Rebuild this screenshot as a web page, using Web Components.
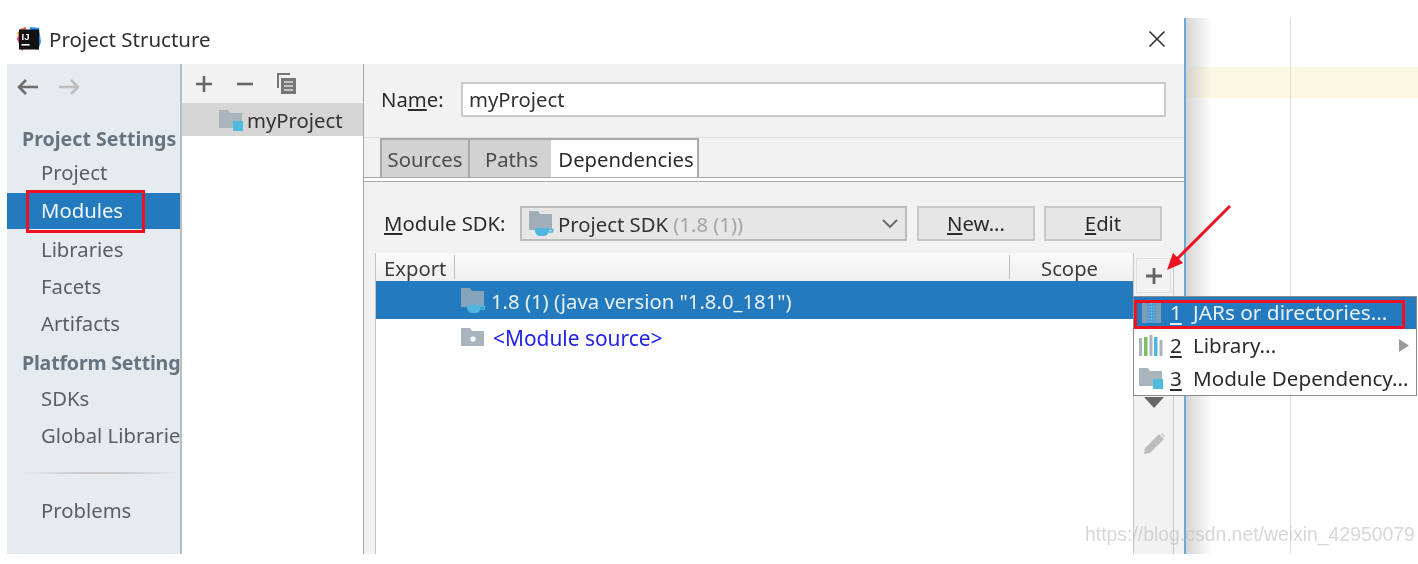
<!DOCTYPE html>
<html>
<head>
<meta charset="utf-8">
<title>Project Structure</title>
<style>
    html, body { margin: 0; background: #fff; }
    body { font-family: "Noto Sans", "Open Sans", sans-serif; font-size: 20.3px; color: #333; }
</style>
</head>
<body>
<ps-app>
    <ps-titlebar slot="title">Project Structure</ps-titlebar>
    <ps-sidebar slot="sidebar">
        <ps-nav-item kind="header" style="height:36px;line-height:38px">Project Settings</ps-nav-item>
        <ps-nav-item style="line-height:33px">Project</ps-nav-item>
        <ps-nav-item selected style="height:36px">Modules</ps-nav-item>
        <ps-nav-item style="margin-top:1px;line-height:38px">Libraries</ps-nav-item>
        <ps-nav-item style="line-height:38px">Facets</ps-nav-item>
        <ps-nav-item style="line-height:38px">Artifacts</ps-nav-item>
        <ps-nav-item kind="header" style="margin-top:3px;line-height:38px;letter-spacing:-.2px">Platform Setting</ps-nav-item>
        <ps-nav-item>SDKs</ps-nav-item>
        <ps-nav-item>Global Librarie</ps-nav-item>
        <ps-nav-item kind="rule"></ps-nav-item>
        <ps-nav-item>Problems</ps-nav-item>
    </ps-sidebar>
    <ps-modules slot="modules"></ps-modules>
    <ps-module-panel slot="panel"></ps-module-panel>
    <ps-editor slot="editor"></ps-editor>
    <ps-popup slot="overlay"></ps-popup>
</ps-app>

<script>
(function () {
    // small svg bits used in more than one element
    const folder = (c) => `<path d="M0 2h9l2 3h12v15H0z" fill="${c}"/>`;
    const sdkIcon = (c) => `<svg width="25" height="25" viewBox="0 0 25 25">
        <path d="M0 0h9l2 3h12v16H0z" fill="${c}"/>
        <path d="M6 17h14v2c0 3-2 6-5 6h-4c-3 0-5-3-5-6z" fill="#4fb6de"/>
        <path d="M20 18.500h3.500v2.500H20" fill="none" stroke="#4fb6de" stroke-width="1.500"/>
    </svg>`;
    const moduleIcon = `<svg width="25" height="24" viewBox="0 0 25 24">${folder('#a9b5bd')}<rect x="14" y="13" width="10" height="10" fill="#4fb9de"/></svg>`;

    function define(name, css, html) {
        const template = document.createElement('template');
        template.innerHTML = `<style>${css}</style>${html}`;
        customElements.define(name, class extends HTMLElement {
            constructor() {
                super();
                this.attachShadow({ mode: 'open' }).appendChild(template.content.cloneNode(true));
            }
        });
    }

    define('ps-app', `
        :host { display: block; position: relative; width: 1418px; height: 564px; overflow: hidden; filter: blur(0.55px); }
        .page { display: flex; padding: 18px 0 0 7px; height: 536px; }
        .dialog { width: 1177px; display: flex; flex-direction: column; border-right: 2px solid #6aa9dc; background: #fff; }
        .content { flex: 1; display: flex; min-height: 0; }
        .arrow { position: absolute; left: 1160px; top: 198px; }
        .mark { position: absolute; left: 26px; top: 190px; width: 113px; height: 37px; border: 3px solid #ee1122; }
        .popmark { position: absolute; left: 1134px; top: 300px; width: 265px; height: 23px; border: 3px solid #ee1122; z-index: 3; }
        .water { position: absolute; left: 1085px; top: 523px; font: 19.4px "Liberation Sans", Arial, sans-serif; color: rgba(190,190,190,.62); white-space: nowrap; z-index: 4; }
    `, `
        <div class="page">
            <div class="dialog">
                <slot name="title"></slot>
                <div class="content">
                    <slot name="sidebar"></slot>
                    <slot name="modules"></slot>
                    <slot name="panel"></slot>
                </div>
            </div>
            <slot name="editor"></slot>
        </div>
        <slot name="overlay"></slot>
        <div class="mark"></div>
        <div class="popmark"></div>
        <svg class="arrow" width="76" height="76" viewBox="0 0 76 76">
            <path d="M70 8L14 64" stroke="#ee1122" stroke-width="3" fill="none"/>
            <path d="M7 72l6-17 10 10z" fill="#ee1122"/>
        </svg>
        <div class="water">https://blog.csdn.net/weixin_42950079</div>
    `);

    define('ps-titlebar', `
        :host { display: flex; align-items: center; height: 46px; box-sizing: border-box; padding: 0 18px 4px 10px; flex: none; color: #2f2f2f; font-size: 20.5px; }
        .t { margin-left: 8px; flex: 1; }
        svg { display: block; }
    `, `
        <svg width="24" height="24" viewBox="0 0 24 24">
            <path d="M3 2L9 0 8 20 5 24 0 12z" fill="#f0326e"/>
            <path d="M13 0l9 1 2 14-3 8-10-3z" fill="#1f8ceb"/>
            <path d="M0 6l6-5 5 4-8 8z" fill="#f7941d"/>
            <rect x="2" y="2.500" width="20" height="20" fill="#111"/>
            <text x="4.500" y="12.500" font-family="Liberation Sans" font-size="9.500" font-weight="700" fill="#fff">IJ</text>
            <rect x="4.500" y="17" width="8" height="1.600" fill="#fff"/>
        </svg>
        <span class="t"><slot></slot></span>
        <svg width="18" height="18" viewBox="0 0 18 18"><path d="M1.500 1.500l15 15M16.500 1.500l-15 15" stroke="#333" stroke-width="1.600" fill="none"/></svg>
    `);

    define('ps-sidebar', `
        :host { display: flex; flex-direction: column; width: 173px; flex: none; background: #e6ebf0; border-right: 2px solid #b9bcbf; overflow: hidden; }
        .nav { height: 56px; flex: none; display: flex; align-items: flex-start; gap: 19px; padding-left: 9px; box-sizing: border-box; }
        svg { margin-top: 13px; }
    `, `
        <div class="nav">
            <svg width="23" height="20" viewBox="0 0 23 20"><path d="M22 10H3M10 3l-7 7 7 7" stroke="#6e6e6e" stroke-width="2.600" fill="none"/></svg>
            <svg width="23" height="20" viewBox="0 0 23 20"><path d="M1 10h19M13 3l7 7-7 7" stroke="#bdbdbd" stroke-width="2.600" fill="none"/></svg>
        </div>
        <slot></slot>
    `);

    class NavItem extends HTMLElement {
        constructor() {
            super();
            this.attachShadow({ mode: 'open' }).innerHTML = `
                <style>
                    :host { display: block; height: 37px; line-height: 35px; padding-left: 34px; color: #5a5f66; white-space: nowrap; flex: none; }
                    :host([selected]) { background: #247abf; color: #f0f6fb; }
                    :host([kind="header"]) { padding-left: 15px; font-weight: 700; font-size: 19.6px; color: #667480; }
                    :host([kind="rule"]) { height: 2px; margin: 17px 0 19px 15px; padding: 0; background: linear-gradient(90deg, #e6ebf0, #c6c8ca 40%, #c6c8ca 60%, #e6ebf0); }
                </style>
                <slot></slot>`;
        }
    }
    customElements.define('ps-nav-item', NavItem);

    define('ps-modules', `
        :host { display: block; width: 181px; flex: none; background: #fff; border-right: 1px solid #a8a8a8; }
        .bar { height: 39px; background: #f2f2f2; display: flex; align-items: center; padding-left: 12px; gap: 21px; }
        .row { height: 33px; background: #d5d5d5; display: flex; align-items: center; padding-left: 37px; gap: 3px; color: #333; }
        svg { display: block; }
    `, `
        <div class="bar">
            <svg width="20" height="20" viewBox="0 0 20 20"><path d="M10 2v16M2 10h16" stroke="#666" stroke-width="2.600"/></svg>
            <svg width="20" height="20" viewBox="0 0 20 20"><path d="M2 10h16" stroke="#666" stroke-width="2.600"/></svg>
            <svg width="22" height="22" viewBox="0 0 22 22"><path d="M2 15V1h12" stroke="#777" stroke-width="2" fill="none"/><rect x="5" y="5" width="15" height="16" fill="#777"/><path d="M8 9h9M8 13h9M8 17h9" stroke="#ddd" stroke-width="1.400"/></svg>
        </div>
        <div class="row">${moduleIcon}<span>myProject</span></div>
    `);

    define('ps-module-panel', `
        :host { flex: 1; display: flex; flex-direction: column; min-width: 0; background: #f2f2f2; }
        .name { height: 73px; box-sizing: border-box; padding: 18px 18px 0 17px; display: flex; gap: 20px; flex: none; }
        .name label { width: 60px; line-height: 35px; color: #2b2b2b; white-space: nowrap; }
        .name .in { flex: 1; height: 35px; box-sizing: border-box; border: 2px solid #cbcbcb; background: #fff; padding-left: 6px; line-height: 31px; }
        .tabs { height: 40px; flex: none; box-sizing: border-box; border-top: 1px solid #dedede; padding-left: 16px; display: flex; align-items: stretch; }
        .tab { box-sizing: border-box; border: 2px solid #a9a9a9; border-bottom: 0; border-right: 0; padding-top: 1px; background: #d2d2d2; color: #4c4c4c; display: flex; align-items: center; justify-content: center; }
        .tab.paths { padding-left: 2px; }
        .tab.on { background: #fff; color: #2b2b2b; border-right: 2px solid #a9a9a9; border-left: 0; padding-left: 4px; }
        .strip { height: 5px; box-sizing: border-box; flex: none; background: #fff; border-top: 1px solid #a9a9a9; border-bottom: 1px solid #a9a9a9; }
        .sdk { display: flex; align-items: stretch; height: 35px; margin: 24px 0 0 20px; flex: none; }
        .sdk label { width: 136px; line-height: 35px; color: #2b2b2b; white-space: nowrap; }
        .combo { width: 387px; box-sizing: border-box; border: 2px solid #bcbcbc; background: #e6e6e6; display: flex; align-items: center; padding: 0 7px; gap: 4px; }
        .combo .v { flex: 1; white-space: nowrap; }
        .combo em { font-style: normal; color: #a5a5a5; }
        .btn { width: 118px; margin-left: 10px; box-sizing: border-box; border: 2px solid #c8c8c8; background: #e6e6e6; text-align: center; line-height: 31px; color: #2b2b2b; }
        .btn + .btn { margin-left: 9px; }
        .deps { flex: 1; display: flex; margin: 12px 10px 0 11px; min-height: 0; }
        .table { flex: 1; background: #fff; border-left: 1px solid #c4c4c4; min-width: 0; }
        .head { height: 28px; display: flex; background: linear-gradient(#fbfbfb, #efefef); color: #3c3c3c; box-sizing: border-box; }
        .head .c1 { width: 79px; box-sizing: border-box; padding-left: 8px; border-right: 1px solid #bdbdbd; margin: 2px 0; line-height: 26px; }
        .head .c2 { flex: 1; border-right: 1px solid #bdbdbd; margin: 2px 0; }
        .head .c3 { width: 123px; box-sizing: border-box; padding-left: 31px; line-height: 26px; margin: 2px 0; }
        .dep { height: 38px; box-sizing: border-box; display: flex; align-items: center; padding-left: 85px; gap: 6px; white-space: nowrap; }
        .dep.on { background: #247abf; color: #e9f1f8; }
        .dep.on span { padding-top: 2px; margin-left: -1px; }
        .dep a { color: #2222ee; text-decoration: none; margin-left: 2px; font-size: 20.9px; }
        .tools { width: 41px; flex: none; box-sizing: border-box; border-left: 1px solid #c4c4c4; border-right: 1px solid #c9c9c9; display: flex; flex-direction: column; align-items: center; position: relative; }
        .plus { margin-top: 5px; width: 35px; height: 35px; box-sizing: border-box; border: 1px solid #dfdfdf; display: flex; align-items: center; justify-content: center; }
        .down { margin-top: 104px; }
        .pen { margin-top: 24px; }
        svg { display: block; flex: none; }
        u { text-underline-offset: 2px; }
    `, `
        <div class="name">
            <label>Na<u>m</u>e:</label>
            <div class="in">myProject</div>
        </div>
        <div class="tabs">
            <div class="tab" style="width:88px">Sources</div>
            <div class="tab paths" style="width:83px">Paths</div>
            <div class="tab on" style="width:148px">Dependencies</div>
        </div>
        <div class="strip"></div>
        <div class="sdk">
            <label><u>M</u>odule SDK:</label>
            <div class="combo">
                ${sdkIcon('#a2aeb7')}
                <span class="v">Project SDK <em>(1.8 (1))</em></span>
                <svg width="16" height="10" viewBox="0 0 16 10"><path d="M1 1l7 7 7-7" stroke="#666" stroke-width="1.800" fill="none"/></svg>
            </div>
            <div class="btn"><u>N</u>ew...</div>
            <div class="btn"><u>E</u>dit</div>
        </div>
        <div class="deps">
            <div class="table">
                <div class="head"><div class="c1">Export</div><div class="c2"></div><div class="c3">Scope</div></div>
                <div class="dep on">${sdkIcon('#86a5bb')}<span>1.8 (1) (java version "1.8.0_181")</span></div>
                <div class="dep"><svg width="24" height="24" viewBox="0 0 24 24">${folder('#a9b5bd')}<circle cx="12" cy="13" r="2.600" fill="#fff"/></svg><a>&lt;Module source&gt;</a></div>
            </div>
            <div class="tools">
                <div class="plus"><svg width="18" height="18" viewBox="0 0 18 18"><path d="M9 1v16M1 9h16" stroke="#666" stroke-width="2.800"/></svg></div>
                <svg class="down" width="20" height="11" viewBox="0 0 20 11"><path d="M0 0h20L10 11z" fill="#666"/></svg>
                <svg class="pen" width="24" height="24" viewBox="0 0 24 24"><path d="M17 2l5 5L8 21l-6 1 1-6zM20 1l3 3-1 1-3-3z" fill="#bdbdbd"/></svg>
            </div>
        </div>
    `);

    define('ps-editor', `
        :host { display: block; flex: 1; position: relative; background: #fff; }
        .band { margin-top: 49px; height: 31px; background: #fdf8e4; }
        .line { position: absolute; left: 104px; top: 0; bottom: 0; width: 1px; background: #e0e0e0; }
        .shade { position: absolute; left: 0; top: 0; bottom: 0; width: 26px; background: linear-gradient(90deg, rgba(190,190,190,.65), rgba(255,255,255,0)); }
    `, `
        <div class="band"></div>
        <div class="line"></div>
        <div class="shade"></div>
    `);

    define('ps-popup', `
        :host { display: block; position: absolute; left: 1133px; top: 296px; width: 284px; box-sizing: border-box; border: 1px solid #8c8c8c; background: #fff; z-index: 2; font-size: 20.6px; }
        .row { height: 33px; box-sizing: border-box; padding-bottom: 2px; display: flex; align-items: center; color: #2b2b2b; white-space: nowrap; position: relative; }
        .row.on { height: 32px; background: #247abf; color: #e9f1f8; }
        .row.on span:last-child { font-size: 20.8px; }
        .ic { width: 26px; margin-left: 5px; flex: none; display: flex; }
        .num { width: 23px; margin-left: 5px; flex: none; text-align: left; }
        .sub { position: absolute; right: 7px; top: 10px; }
        u { text-underline-offset: 3px; }
    `, `
        <div class="row on">
            <span class="ic"><svg width="24" height="24" viewBox="0 0 24 24">
                <rect x="3" y="2" width="5" height="21" fill="#7c9db6"/>
                <rect x="8" y="2" width="9" height="21" fill="#4f9bd0"/>
                <path d="M10 3v19M12.500 3v19M15 3v19" stroke="#7fc0e6" stroke-width="1" stroke-dasharray="1.500 1.500"/>
                <rect x="17" y="2" width="5" height="21" fill="#7c9db6"/>
            </svg></span>
            <span class="num"><u>1</u></span><span>JARs or directories...</span>
        </div>
        <div class="row">
            <span class="ic"><svg width="24" height="24" viewBox="0 0 24 24"><rect x="0" y="5" width="3" height="18" fill="#a9b5bd"/><rect x="5" y="4" width="3.500" height="19" fill="#7fbf5c"/><rect x="10.500" y="2" width="3" height="21" fill="#a9b5bd"/><rect x="15" y="4" width="3.500" height="19" fill="#4fb6de"/><rect x="20.500" y="7" width="3" height="16" fill="#a9b5bd"/></svg></span>
            <span class="num"><u>2</u></span><span>Library...</span>
            <svg class="sub" width="10" height="13" viewBox="0 0 10 13"><path d="M0 0l10 6.500L0 13z" fill="#9a9a9a"/></svg>
        </div>
        <div class="row">
            <span class="ic">${moduleIcon}</span>
            <span class="num"><u>3</u></span><span>Module Dependency...</span>
        </div>
    `);
})();
</script>
</body>
</html>
